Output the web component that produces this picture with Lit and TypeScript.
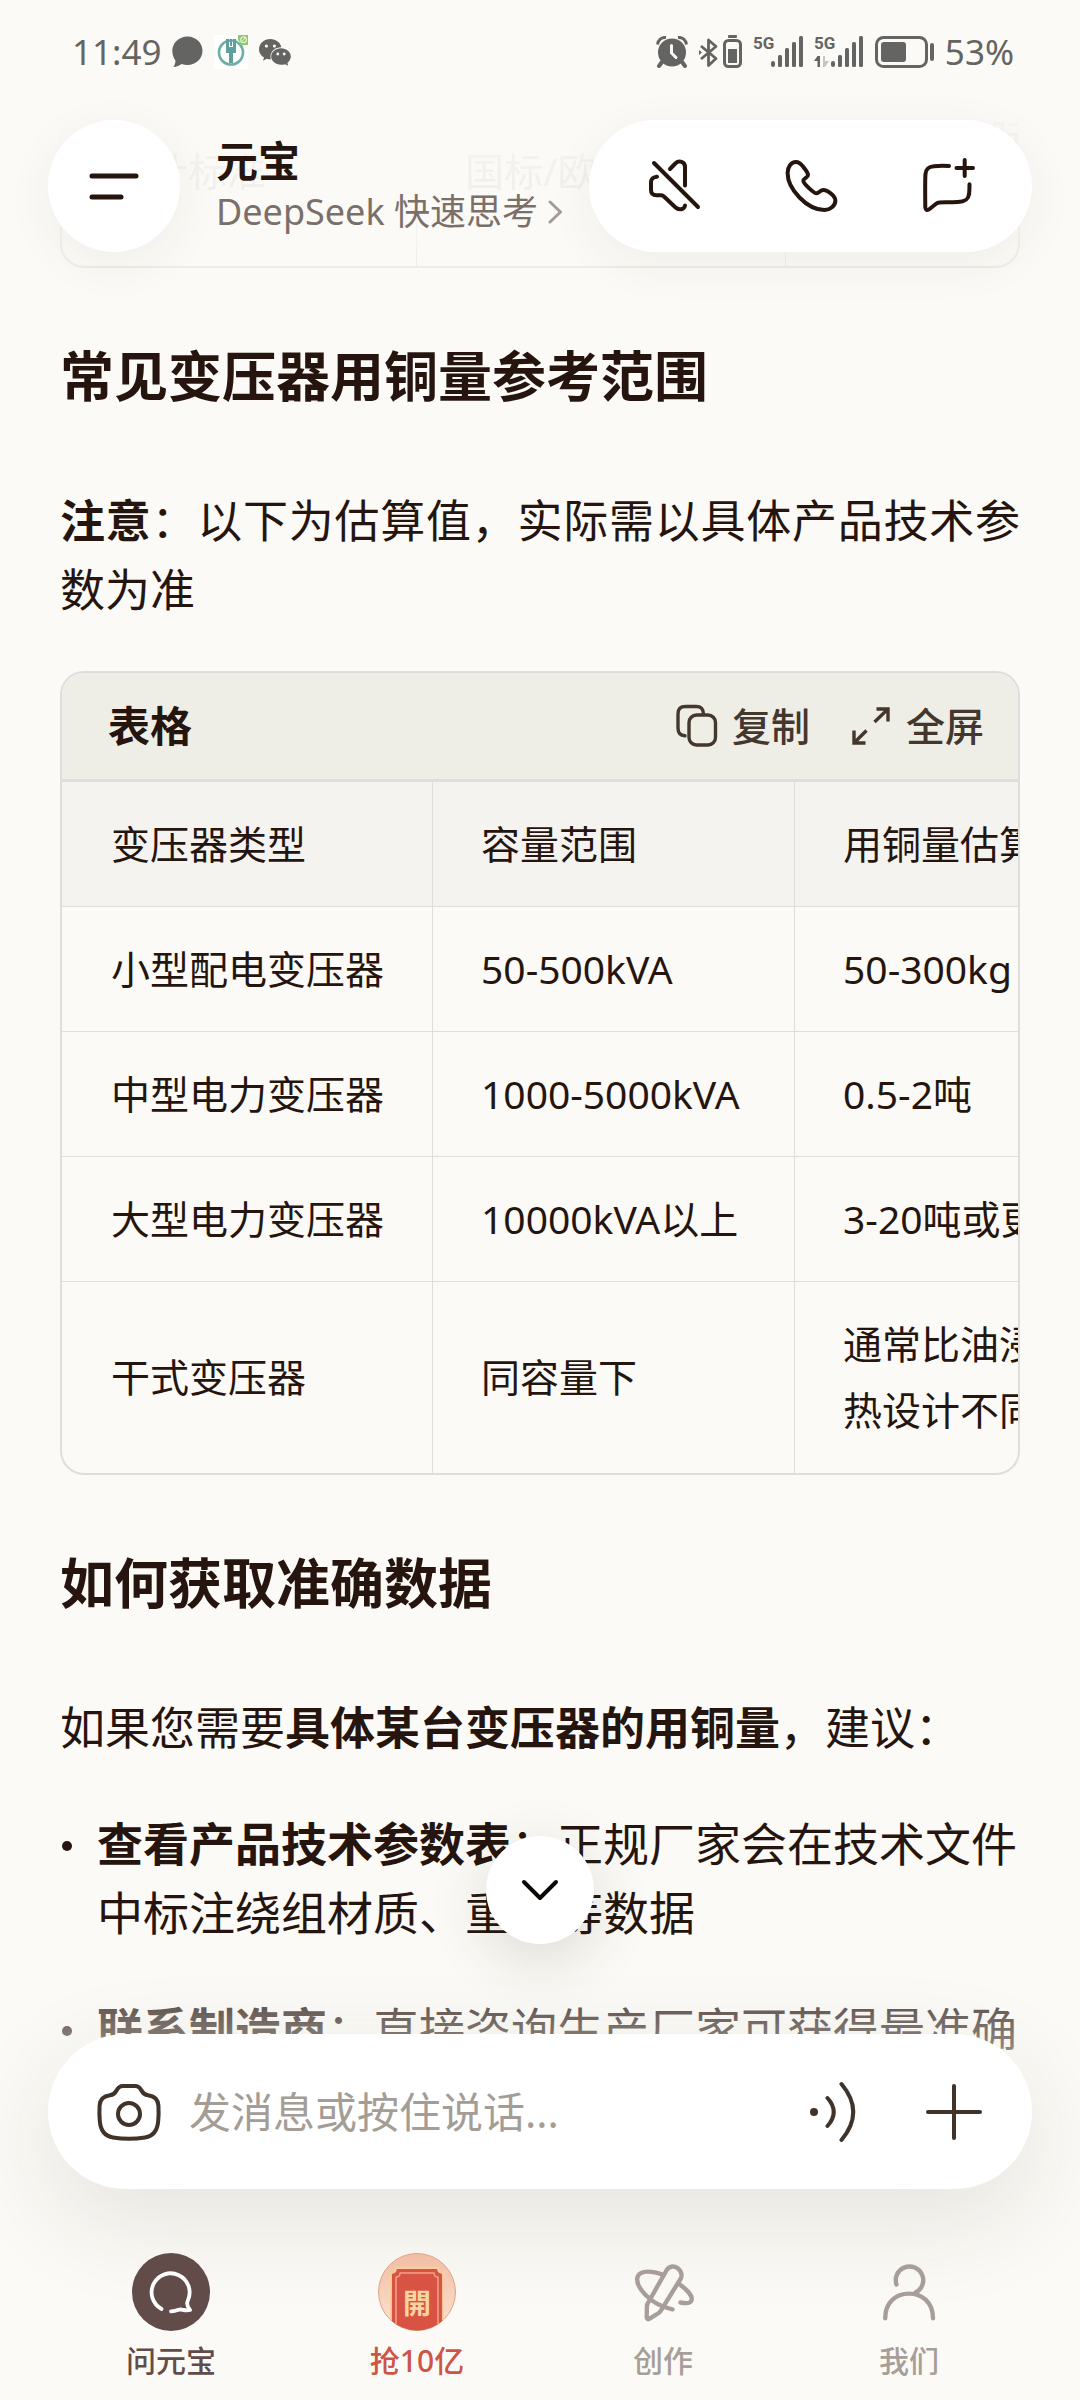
import { LitElement, html, svg, css } from "lit";
import { customElement, state } from "lit/decorators.js";

type Cell = string[];

const HEADINGS: string[] = ["变压器类型", "容量范围", "用铜量估算"];

const ROWS: Cell[][] = [
  [["小型配电变压器"], ["50-500kVA"], ["50-300kg"]],
  [["中型电力变压器"], ["1000-5000kVA"], ["0.5-2吨"]],
  [["大型电力变压器"], ["10000kVA以上"], ["3-20吨或更多"]],
  [["干式变压器"], ["同容量下"], ["通常比油浸式", "热设计不同"]],
];

const lines = (cell: Cell) => cell.map((t, i) => (i ? html`<br />${t}` : t));

const bars = (x: number) => svg`
  <rect x=${x} y="26" width="4" height="6" rx="2"/>
  <rect x=${x + 7} y="20" width="4" height="12" rx="1.5"/>
  <rect x=${x + 14} y="13" width="4" height="19" rx="1.5"/>
  <rect x=${x + 21} y="7" width="4" height="25" rx="1.5"/>
  <rect x=${x + 28} y="1" width="4" height="31" rx="1.5"/>`;

@customElement("status-bar")
class StatusBar extends LitElement {
  static styles = css`
    :host {
      display: flex;
      justify-content: space-between;
      align-items: center;
      height: 104px;
      padding: 0 66px 0 72px;
      color: #646462;
      font-size: 35px;
      line-height: 48px;
    }
    .group {
      display: flex;
      align-items: center;
      gap: 11px;
    }
    svg {
      display: block;
      fill: currentColor;
    }
    .net {
      font: bold 17px "Liberation Sans Narrow", Roboto, sans-serif;
    }
    .battery {
      display: flex;
      align-items: center;
      gap: 10px;
    }
  `;

  render() {
    return html`
      <div class="group">
        <span>11:49</span>
        <svg width="31" height="32" viewBox="0 0 31 32" aria-hidden="true">
          <path d="M15.500 .5C24 .5 30.500 7 30.500 14.800S24 29 15.500 29c-2 0-4-.3-5.700-1C7.500 29.600 4.500 30.700 1.200 31 2.600 29.200 3.400 27.200 3.500 24.700 1.500 22 .3 18.600.3 14.800.3 7 7 .5 15.500.5Z"/>
        </svg>
        <svg width="34" height="34" viewBox="0 0 34 34" aria-hidden="true">
          <rect width="34" height="34" fill="#fff"/>
          <circle cx="17" cy="17.500" r="12" fill="none" stroke="#6bafa5" stroke-width="2.600"/>
          <path d="M12 4h3v8h4V4h3v14h-3v10h-4V18h-3Z" fill="#5da19c"/>
          <path d="M16 4h2v7h-2Z" fill="#5da19c"/>
          <path d="M24 0h10v10h-7q-1-4-3-5Z" fill="#8fc866"/>
          <circle cx="29.500" cy="4.700" r="2.800" fill="none" stroke="#e6f6d8" stroke-width="1.200"/>
          <path d="m31 3-3 3.500" stroke="#e6f6d8" stroke-width="1"/>
        </svg>
        <svg width="32" height="27" viewBox="0 0 32 27" aria-hidden="true">
          <path d="M11.300 0C17 0 21.500 3.600 22.300 8.300 16 8.300 11.500 12.500 11.500 17.500c0 1 .2 1.900.5 2.800-1.700.1-3-.1-4.300-.5L4 21.700l1-3.200C2 16.600 0 13.800 0 10.400 0 4.600 5 0 11.300 0Z"/>
          <path d="M22 9.300c5.500 0 9.800 3.700 9.800 8.300 0 2.600-1.300 4.800-3.400 6.300l.8 2.800-3.200-1.500c-1.200.4-2.600.6-4 .6-5.500 0-9.800-3.700-9.800-8.200S16.500 9.300 22 9.300Z"/>
          <g fill="#fbfaf6"><circle cx="7.400" cy="7" r="1.600"/><circle cx="15.400" cy="7" r="1.600"/><circle cx="18.800" cy="15" r="1.400"/><circle cx="25.200" cy="15" r="1.400"/></g>
        </svg>
      </div>
      <div class="group">
        <svg width="32" height="32" viewBox="0 0 32 32" aria-hidden="true">
          <circle cx="16" cy="16.500" r="14"/>
          <path d="M1.500 8.500C2 4 5.500 1 10 1.500M30.500 8.500C30 4 26.500 1 22 1.500" fill="none" stroke="currentColor" stroke-width="3"/>
          <path d="m6 26-3 4M26 26l3 4" stroke="currentColor" stroke-width="4" stroke-linecap="round"/>
          <path d="M15.500 9.500V17l4.500 4.500" fill="none" stroke="#fbfaf6" stroke-width="3" stroke-linecap="round"/>
        </svg>
        <svg width="43" height="34" viewBox="0 0 43 34" aria-hidden="true">
          <path d="m2 11 15 12.500-7.500 7V5l7.500 6.500L2 24" fill="none" stroke="currentColor" stroke-width="2.800" stroke-linejoin="round"/>
          <path d="M0 15l3 2.500L0 20Z"/>
          <rect x="29" y="0" width="9" height="3" rx="1"/>
          <rect x="25.500" y="5.500" width="16" height="26" rx="4" fill="none" stroke="currentColor" stroke-width="3"/>
          <rect x="29" y="14" width="9" height="14"/>
        </svg>
        <svg class="net" width="50" height="34" viewBox="0 0 50 34" role="img" aria-label="5G">
          <text x="0" y="14">5G</text>
          ${bars(18)}
        </svg>
        <svg class="net" width="50" height="34" viewBox="0 0 50 34" role="img" aria-label="5G">
          <text x="0" y="14">5G</text>
          <path d="M3.500 21H6v11H3.500v-6H0Z"/>
          <path d="M9 21h2v5h4l-4 6H9Z" opacity=".35"/>
          ${bars(17)}
        </svg>
        <div class="battery">
          <svg width="60" height="34" viewBox="0 0 60 34" aria-hidden="true">
            <rect x="1.500" y="2.500" width="50" height="29" rx="7" fill="none" stroke="currentColor" stroke-width="3"/>
            <rect x="6" y="7" width="25" height="20" rx="3"/>
            <rect x="55" y="8" width="4" height="18" rx="2"/>
          </svg>
          <span>53%</span>
        </div>
      </div>
    `;
  }
}

@customElement("chat-header")
class ChatHeader extends LitElement {
  static styles = css`
    :host {
      display: flex;
      align-items: center;
      padding: 16px 48px 48px;
      gap: 36px;
    }
    button {
      display: grid;
      place-items: center;
      padding: 0;
      border: 0;
      background: none;
      color: #25150e;
      font: inherit;
    }
    svg {
      display: block;
      fill: none;
      stroke: currentColor;
      stroke-width: 4;
      stroke-linecap: round;
      stroke-linejoin: round;
    }
    .menu,
    .actions {
      flex: none;
      height: 132px;
      border-radius: 66px;
      background: #fff;
      box-shadow: 0 12px 48px rgba(60, 50, 30, 0.06);
    }
    .menu {
      width: 132px;
    }
    .actions {
      display: grid;
      grid-template-columns: repeat(3, 137px);
      padding: 0 16px;
      margin-left: auto;
    }
    .heading {
      flex: 1;
      min-width: 0;
      margin-right: -36px;
    }
    .title {
      margin: 0;
      font-size: 42px;
      line-height: 51px;
      font-weight: 700;
      color: #25150e;
    }
    .model {
      display: flex;
      align-items: center;
      gap: 10px;
      font-size: 36px;
      line-height: 51px;
      color: #7b7069;
      white-space: nowrap;
    }
    .more {
      color: #a49b96;
      stroke-width: 3;
    }
  `;

  render() {
    return html`
      <button class="menu" aria-label="菜单">
        <svg width="54" height="30" viewBox="0 0 54 30"><path d="M5 5h44M5 26h29" stroke-width="5"/></svg>
      </button>
      <div class="heading">
        <h1 class="title">元宝</h1>
        <button class="model">
          DeepSeek 快速思考
          <svg class="more" width="15" height="26" viewBox="0 0 15 26"><path d="m2 3 10.500 10L2 23"/></svg>
        </button>
      </div>
      <div class="actions">
        <button aria-label="静音">
          <svg width="56" height="56" viewBox="0 0 56 56">
            <path d="m8 5 44 44M24 11l5.300-5.500C33 2 39 3.500 39 9v18.500M11 18.700C7.500 19 5 21 5 24v8c0 3.500 2 5.300 5.500 5.300H15c1.500 0 2.500.7 3.500 1.700l10.800 10.300C33 52.800 38.300 51.500 39 47.500"/>
          </svg>
        </button>
        <button aria-label="通话">
          <svg width="56" height="56" viewBox="0 0 56 56">
            <path d="M4.600 15C4.600 9 8 4 13 4c3 0 5 2 7 4.500 2.500 3.500 5 6 5 8.500 0 2.800-4.600 3-4.600 6 0 2.500 10.500 12.300 13.100 12.300 2.500 0 3.800-3.300 6.900-3.300 4 0 12 6 12 10.500C52.400 48 47 52 41.500 52 24 52 4.600 31 4.600 15Z"/>
          </svg>
        </button>
        <button aria-label="新对话">
          <svg width="56" height="60" viewBox="0 0 56 60">
            <path d="M29 10C24 9.700 18 9.800 14 10.200 8 10.700 5.800 13 5.400 18.500 5 28 5.200 42 5.300 51c0 3 2 3.800 4.300 2l6.500-5.200c1.200-1 2-1.300 3.500-1.400 6-.1 12 .1 18-.3 7-.4 10.800-2.100 11.500-8 .3-3.200.4-6.500.4-9.800M36.500 12H53M44.700 4v16"/>
          </svg>
        </button>
      </div>
    `;
  }
}

@customElement("answer-table")
class AnswerTable extends LitElement {
  static styles = css`
    :host {
      display: block;
      overflow: hidden;
      border: 2px solid #dededb;
      border-radius: 24px;
    }
    .bar {
      display: flex;
      align-items: center;
      height: 106px;
      padding: 0 34px 0 46px;
      gap: 40px;
      border-bottom: 3px solid #dededb;
      background: #eeeee7;
    }
    .caption {
      margin: 0 auto 0 0;
      font-size: 42px;
      line-height: 66px;
      font-weight: 700;
    }
    .tool {
      display: flex;
      align-items: center;
      gap: 14px;
      padding: 0;
      border: 0;
      background: none;
      color: #43372e;
      font: 500 39px/66px var(--text);
    }
    .tool svg {
      display: block;
      fill: none;
      stroke: currentColor;
      stroke-width: 3.4;
      stroke-linecap: round;
      stroke-linejoin: round;
    }
    .scroll {
      overflow: hidden;
    }
    table {
      border-collapse: separate;
      border-spacing: 0;
      font-size: 39px;
      line-height: 66px;
      white-space: nowrap;
    }
    th,
    td {
      min-width: 265px;
      padding: 29px 48px;
      text-align: left;
      font-weight: 400;
      border-right: 1px solid #dededb;
      border-bottom: 1px solid #dededb;
    }
    th:first-child,
    td:first-child {
      padding-left: 49px;
    }
    th {
      background: #f4f3ef;
    }
    th:last-child,
    td:last-child {
      border-right: 0;
    }
    tbody tr:last-child td {
      padding-bottom: 30px;
      border-bottom: 0;
    }
  `;

  render() {
    return html`
      <div class="bar">
        <h3 class="caption">表格</h3>
        <button class="tool">
          <svg width="42" height="44" viewBox="0 0 42 44">
            <rect x="13" y="11" width="26.500" height="30" rx="7.500"/>
            <path d="M27.500 10.500C27.500 5 25 2.500 20 2.500H9.500C4.500 2.500 2 5 2 10v14c0 5 2 7.500 7 7.800"/>
          </svg>
          复制
        </button>
        <button class="tool">
          <svg width="42" height="44" viewBox="0 0 42 44">
            <path d="M26.500 5H38v12.500M38 5 24.500 18M4 26.500V39h11.500M4 39l12.500-12.500" stroke-linecap="butt" stroke-linejoin="miter"/>
          </svg>
          全屏
        </button>
      </div>
      <div class="scroll">
        <table>
          <thead>
            <tr>${HEADINGS.map((h) => html`<th scope="col">${h}</th>`)}</tr>
          </thead>
          <tbody>
            ${ROWS.map((r) => html`<tr>${r.map((c) => html`<td>${lines(c)}</td>`)}</tr>`)}
          </tbody>
        </table>
      </div>
    `;
  }
}

@customElement("message-composer")
class MessageComposer extends LitElement {
  static styles = css`
    :host {
      display: flex;
      align-items: center;
      gap: 27px;
      height: 155px;
      padding: 0 48px;
      border-radius: 78px;
      background: #fff;
      box-shadow: 0 30px 100px rgba(60, 50, 30, 0.11);
    }
    button {
      padding: 0;
      border: 0;
      background: none;
      color: #3f332a;
    }
    svg {
      display: block;
      fill: none;
      stroke: currentColor;
      stroke-width: 4;
      stroke-linecap: round;
      stroke-linejoin: round;
    }
    .entry {
      flex: 1;
      min-width: 0;
      padding: 0;
      border: 0;
      outline: 0;
      background: none;
      color: #25150e;
      font: 400 42px/60px var(--text);
    }
    .entry::placeholder {
      color: #a49d96;
      opacity: 1;
    }
    .tools {
      display: flex;
      align-items: center;
      gap: 66px;
    }
  `;

  render() {
    return html`
      <button aria-label="拍照">
        <svg width="66" height="64" viewBox="0 0 66 64">
          <path d="M27 6h12c3.500 0 5 1.500 6.500 4.500S48.500 14.700 52 15.200c6.500.8 10 4 10.400 10.300.3 5 .3 10.500-.2 15.500C61.500 50 58 56 49 57.500c-9.500 1.500-22.500 1.500-32 0C8 56 4.500 50 3.800 41c-.5-5-.5-10.500-.2-15.500C4 19.200 7.500 16 14 15.200c3.500-.5 5-1.700 6.500-4.700S23.500 6 27 6Z"/>
          <circle cx="33" cy="34" r="11"/>
        </svg>
      </button>
      <input class="entry" type="text" aria-label="消息" placeholder="发消息或按住说话..." />
      <div class="tools">
        <button aria-label="语音">
          <svg width="50" height="64" viewBox="0 0 50 64">
            <circle cx="6" cy="32" r="4" fill="currentColor" stroke="none"/>
            <path d="M19.500 18Q32 32 19.500 46M33.500 4Q57 32 33.500 60"/>
          </svg>
        </button>
        <button aria-label="更多">
          <svg width="60" height="60" viewBox="0 0 60 60"><path d="M4 30h52M30 4v52"/></svg>
        </button>
      </div>
    `;
  }
}

@customElement("tab-bar")
class TabBar extends LitElement {
  static styles = css`
    :host {
      display: grid;
      grid-template-columns: repeat(4, 1fr);
    }
    a {
      display: flex;
      flex-direction: column;
      align-items: center;
      gap: 10px;
      color: #a89e99;
      font-size: 30px;
      font-weight: 500;
      line-height: 40px;
      text-decoration: none;
    }
    .current {
      color: #624c49;
    }
    .promo {
      color: #cd5546;
    }
    svg {
      display: block;
      fill: none;
      stroke: currentColor;
      stroke-width: 4.4;
      stroke-linecap: round;
      stroke-linejoin: round;
    }
    .seal {
      font: bold 28px "Liberation Serif", "Noto Sans CJK TC", serif;
    }
  `;

  render() {
    return html`
      <a class="current" href="#ask" aria-current="page">
        <svg width="78" height="78" viewBox="0 0 78 78">
          <circle cx="39" cy="39" r="39" fill="currentColor" stroke="none"/>
          <path d="M29.500 56A19 19 0 1 1 56 47C54 51 55.500 54 58 57 52.500 58.500 50 55.500 46.500 56.800 44 57.800 42 58.300 39 58.300" stroke="#fff" stroke-width="3.800"/>
        </svg>
        问元宝
      </a>
      <a class="promo" href="#bonus">
        <svg width="78" height="78" viewBox="0 0 78 78">
          <defs>
            <linearGradient id="peach" x1="0" y1="0" x2="0" y2="1">
              <stop offset="0" stop-color="#f1bda2"/><stop offset="1" stop-color="#fbe3d3"/>
            </linearGradient>
            <clipPath id="disc"><circle cx="39" cy="39" r="38.500"/></clipPath>
          </defs>
          <circle cx="39" cy="39" r="38.500" fill="url(#peach)" stroke="#e0a383" stroke-width="1"/>
          <g clip-path="url(#disc)">
            <path d="M18 15h42q0 5 5 5v60H13V20q5 0 5-5Z" fill="#d95345" stroke="#fbcf9c" stroke-width="1.800"/>
            <path d="M22 20h34q0 4 4 4v56H18V24q4 0 4-4Z" stroke="#f2a188" stroke-width="1.500"/>
          </g>
          <text class="seal" x="39" y="61" text-anchor="middle" fill="#fcd4a0" stroke="none">開</text>
        </svg>
        抢10亿
      </a>
      <a href="#create">
        <svg width="78" height="78" viewBox="0 0 78 78">
          <path d="m42.700 17-19 33.500c-.6 1-.8 2-.8 3l-.2 10.500c0 2 1.300 2.700 3 1.700l9-5.700c.8-.5 1.500-1.300 2-2.200L56.500 26C61 18 49 8 42.700 17Z"/>
          <path d="M39 21.800C28 17.800 17 17 13.800 23.200 10 33 27 52.500 48.500 56.300M54.500 30.500c8.500 6 14.500 13 13 17-1 2.600-5.500 3-11 2"/>
        </svg>
        创作
      </a>
      <a href="#us">
        <svg width="78" height="78" viewBox="0 0 78 78">
          <path d="M26.500 31.500A13.700 13.700 0 1 1 45.500 39.500M15.200 65.300C15.200 49 26 40.600 39 40.600S63 49 63 65.300"/>
        </svg>
        我们
      </a>
    `;
  }
}

@customElement("app-root")
class AppRoot extends LitElement {
  @state() private following = true;

  static styles = css`
    :host {
      --text: "Noto Sans", "Noto Sans CJK SC", sans-serif;
      display: block;
      position: relative;
      height: 100vh;
      overflow: hidden;
      background: #fbfaf6;
      color: #25150e;
      font-family: var(--text);
    }
    .thread {
      height: 100%;
      box-sizing: border-box;
      overflow: hidden;
      padding: 76px 60px 0;
    }
    .previous {
      overflow: hidden;
      border: 2px solid #dededb;
      border-top: 0;
      border-radius: 0 0 24px 24px;
    }
    .previous table {
      border-spacing: 0;
      font-size: 39px;
      line-height: 66px;
      white-space: nowrap;
    }
    .previous td {
      min-width: 272px;
      padding: 29px 48px;
      border-right: 1px solid #dededb;
    }
    .previous td:first-child {
      min-width: 258px;
    }
    h2 {
      margin: 72px 0 74px;
      font-size: 54px;
      line-height: 72px;
      font-weight: 700;
    }
    p {
      margin: 0 0 47px;
      font-size: 45px;
      line-height: 69px;
      text-align: justify;
    }
    ul {
      display: grid;
      gap: 47px;
      margin: 0;
      padding: 0;
      list-style: none;
      font-size: 46px;
      line-height: 69px;
    }
    li {
      display: flex;
      gap: 25px;
    }
    li::before {
      content: "";
      flex: none;
      width: 10px;
      height: 10px;
      margin: 32px 0 0 2px;
      border-radius: 50%;
      background: currentColor;
    }
    .top {
      position: absolute;
      inset: 0 0 auto;
      background: linear-gradient(#fbfaf6 24%, rgba(251, 250, 246, 0.95) 66%, rgba(251, 250, 246, 0.5) 90%, rgba(251, 250, 246, 0));
    }
    .bottom {
      position: absolute;
      inset: auto 0 0;
      padding: 88px 48px 19px;
      background: linear-gradient(rgba(251, 250, 246, 0), #fbfaf6 200px);
    }
    tab-bar {
      position: relative;
      margin-top: 64px;
    }
    .latest {
      position: absolute;
      left: 50%;
      top: -110px;
      display: grid;
      place-items: center;
      width: 108px;
      height: 108px;
      margin-left: -54px;
      padding: 0;
      border: 0;
      border-radius: 50%;
      background: #fff;
      box-shadow: 0 16px 60px rgba(60, 50, 30, 0.16);
      color: #0b0705;
    }
    .latest svg {
      fill: none;
      stroke: currentColor;
      stroke-width: 4;
      stroke-linecap: round;
      stroke-linejoin: round;
    }
  `;

  private toLatest() {
    const thread = this.renderRoot.querySelector(".thread");
    thread?.scrollTo({ top: thread.scrollHeight, behavior: "smooth" });
    this.following = false;
  }

  render() {
    return html`
      <main class="thread">
        <div class="previous">
          <table>
            <tbody>
              <tr><td>设计标准</td><td>国标/欧标</td><td>国标与国际<br />标准</td></tr>
            </tbody>
          </table>
        </div>
        <h2>常见变压器用铜量参考范围</h2>
        <p><b>注意</b>：以下为估算值，实际需以具体产品技术参数为准</p>
        <answer-table></answer-table>
        <h2>如何获取准确数据</h2>
        <p>如果您需要<b>具体某台变压器的用铜量</b>，建议：</p>
        <ul>
          <li><span><b>查看产品技术参数表</b>：正规厂家会在技术文件中标注绕组材质、重量等数据</span></li>
          <li><span><b>联系制造商</b>：直接咨询生产厂家可获得最准确</span></li>
        </ul>
      </main>
      <div class="top">
        <status-bar></status-bar>
        <chat-header></chat-header>
      </div>
      <div class="bottom">
        ${this.following
          ? html`<button class="latest" aria-label="回到底部" @click=${this.toLatest}>
              <svg width="42" height="26" viewBox="0 0 42 26"><path d="m5 5 16 16L37 5"/></svg>
            </button>`
          : null}
        <message-composer></message-composer>
        <tab-bar></tab-bar>
      </div>
    `;
  }
}
